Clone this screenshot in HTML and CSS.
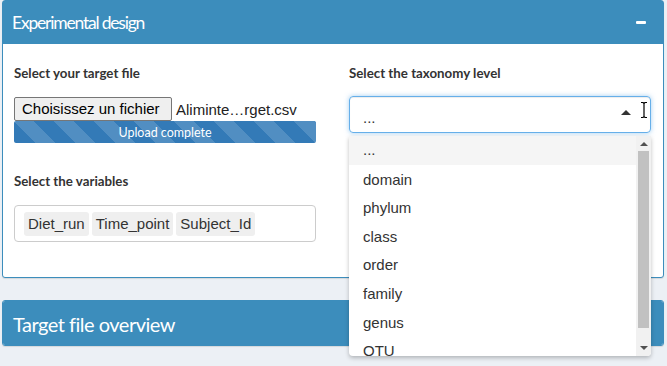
FILE: index.html
```html
<!DOCTYPE html>
<html>
<head>
<meta charset="utf-8">
<link rel="stylesheet" href="styles.css">
</head>
<body>
<div class="page">
  <section class="box">
    <header class="box-header first">
      <h3 class="box-title">Experimental design</h3>
      <span class="collapse-btn"></span>
    </header>
    <div class="box-body">
      <div class="col">
        <div class="field">
          <label class="lbl">Select your target file</label>
          <div class="file-row">
            <span class="file-btn">Choisissez un fichier</span>
            <span class="file-name">Aliminte…rget.csv</span>
          </div>
          <div class="progress"><span>Upload complete</span></div>
        </div>
        <div class="field vars">
          <label class="lbl">Select the variables</label>
          <div class="multi">
            <span class="tag">Diet_run</span>
            <span class="tag">Time_point</span>
            <span class="tag">Subject_Id</span>
          </div>
        </div>
      </div>
      <div class="col">
        <div class="field">
          <label class="lbl">Select the taxonomy level</label>
          <div class="select-wrap">
            <div class="select">
              <span class="sel-value">...</span>
              <span class="caret"></span>
            </div>
            <svg class="ibeam" width="8" height="18" viewBox="0 0 8 18">
              <path d="M1 1.5h2l1 1 1-1h2M1 16.5h2l1-1 1 1h2M4 2.5v13" fill="none" stroke="#fff" stroke-width="3"/>
              <path d="M1 1.5h2l1 1 1-1h2M1 16.5h2l1-1 1 1h2M4 2.5v13" fill="none" stroke="#000" stroke-width="1.2"/>
            </svg>
            <div class="dropdown">
              <ul class="options">
                <li class="active">...</li>
                <li>domain</li>
                <li>phylum</li>
                <li>class</li>
                <li>order</li>
                <li>family</li>
                <li>genus</li>
                <li>OTU</li>
              </ul>
              <div class="scrollbar">
                <span class="arrow up"></span>
                <span class="thumb"></span>
                <span class="arrow down"></span>
              </div>
            </div>
          </div>
        </div>
      </div>
    </div>
  </section>
  <section class="box collapsed">
    <header class="box-header">
      <h3 class="box-title">Target file overview</h3>
    </header>
  </section>
</div>
</body>
</html>
```
FILE: styles.css
```css
* { box-sizing: border-box; }
html, body { margin: 0; padding: 0; }
body {
  background: #ecf0f5;
  font-family: Lato, "Noto Sans", sans-serif;
  color: #333;
  width: 667px;
  height: 366px;
  overflow: hidden;
}
.page { padding: 0 3px 0 2px; }
.box {
  background: #fff;
  border: 1px solid #3c8dbc;
  border-radius: 3px;
  margin-bottom: 22px;
  box-shadow: 0 1px 1px rgba(0,0,0,0.1);
}
.box.collapsed { border-radius: 3px; overflow: hidden; }
.box-header {
  background: #3c8dbc;
  color: #fff;
  height: 43px;
  display: flex;
  align-items: center;
  justify-content: space-between;
  padding: 0 17px 0 9px;
}
.box.collapsed .box-header { height: 44px; padding-left: 10px; padding-top: 1px; }
.box-title {
  margin: 0;
  font-family: Lato, sans-serif;
  font-weight: 400;
  font-size: 17.5px;
  letter-spacing: -1.2px;
}
.box.collapsed .box-title { font-size: 20px; letter-spacing: -0.5px; }
.collapse-btn {
  width: 10px;
  height: 3px;
  background: #fff;
  border-radius: 1px;
}
.box-body {
  display: grid;
  grid-template-columns: 302px 302px;
  column-gap: 33px;
  padding: 0 12px 0 11px;
  height: 233px;
}
.field { display: flex; flex-direction: column; }
.lbl {
  font-weight: 700;
  font-size: 13.3px;
  color: #333;
  margin-top: 21px;
  height: 17px;
  line-height: 17px;
}
.file-row {
  margin-top: 15px;
  display: flex;
  align-items: center;
  height: 24px;
}
.file-btn {
  font-family: "Liberation Sans", Arial, sans-serif;
  font-size: 15px;
  color: #000;
  background: #efefef;
  border: 1px solid #767676;
  border-radius: 2px;
  height: 24px;
  line-height: 22px;
  padding: 0 7px 0 7px;
  width: 158px;
}
.file-name {
  font-family: "Liberation Sans", Arial, sans-serif;
  font-size: 15px;
  color: #222;
  margin-left: 4px;
}
.progress {
  height: 22px;
  border-radius: 2px;
  background-color: #337ab7;
  background-image: linear-gradient(45deg, rgba(255,255,255,.15) 25%, transparent 25%, transparent 50%, rgba(255,255,255,.15) 50%, rgba(255,255,255,.15) 75%, transparent 75%, transparent);
  background-size: 40px 40px;
  color: #fff;
  font-size: 12.5px;
  display: flex;
  align-items: center;
  justify-content: center;
}
.vars .lbl { margin-top: 30px; }
.multi {
  margin-top: 15px;
  height: 37px;
  border: 1px solid #ccc;
  border-radius: 4px;
  display: flex;
  align-items: center;
  gap: 3px;
  padding: 0 9px;
}
.tag {
  font-family: "Liberation Sans", Arial, sans-serif;
  font-size: 15px;
  background: #efefef;
  color: #333;
  height: 24px;
  line-height: 24px;
  padding: 0 4px;
  border-radius: 3px;
}
.select-wrap { position: relative; margin-top: 14px; }
.select {
  height: 37px;
  border: 1px solid #66afe9;
  border-radius: 4px;
  box-shadow: inset 0 1px 1px rgba(0,0,0,.075), 0 0 5px rgba(102,175,233,.6);
  display: flex;
  align-items: center;
  justify-content: space-between;
  padding: 5px 19px 0 13px;
}
.sel-value {
  font-family: "Liberation Sans", Arial, sans-serif;
  font-size: 15px;
  color: #333;
}
.caret {
  width: 0; height: 0;
  border-left: 5px solid transparent;
  border-right: 5px solid transparent;
  border-bottom: 5px solid #333;
  margin-top: -9px;
}
.ibeam { position: absolute; left: 291px; top: 5px; }
.dropdown {
  position: absolute;
  left: 0;
  top: 40px;
  width: 302px;
  height: 220px;
  background: #fff;
  border-radius: 0 0 4px 4px;
  box-shadow: 0 2px 4px rgba(0,0,0,.25);
  display: flex;
  overflow: hidden;
}
.options {
  list-style: none;
  margin: 0;
  padding: 0;
  flex: 1;
}
.options li {
  font-family: "Liberation Sans", Arial, sans-serif;
  font-size: 15px;
  color: #333;
  height: 28.6px;
  line-height: 30px;
  padding-left: 14px;
}
.options li.active { background: #f5f5f5; line-height: 28px; }
.scrollbar {
  width: 15px;
  background: #f1f1f1;
  display: flex;
  flex-direction: column;
  align-items: center;
}
.arrow {
  width: 0; height: 0;
  border-left: 4px solid transparent;
  border-right: 4px solid transparent;
}
.arrow.up { border-bottom: 4px solid #505050; margin-top: 6px; }
.arrow.down { border-top: 4px solid #505050; margin-bottom: 6px; }
.thumb {
  width: 11px;
  background: #c1c1c1;
  margin: 5px 0 0 0;
  height: 177px;
  flex: none;
}
.scrollbar .arrow.down { margin-top: auto; }
```
